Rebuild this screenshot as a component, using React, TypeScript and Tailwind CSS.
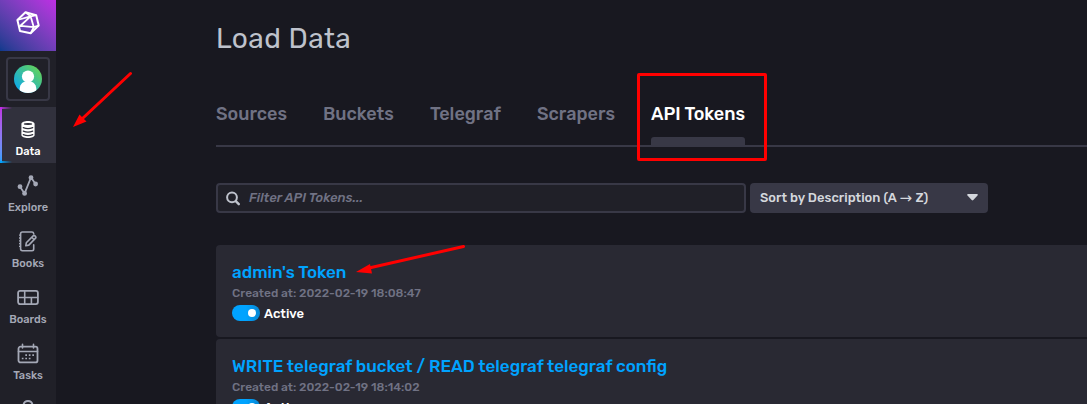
import type { ReactNode } from "react";

const tabs = [
  { label: "Sources", width: "w-[71px]" },
  { label: "Buckets", width: "w-[71px]" },
  { label: "Telegraf", width: "w-[71px]" },
  { label: "Scrapers", width: "w-[78px]" },
];

const tokens = [
  { name: "admin's Token", created: "2022-02-19 18:08:47" },
  { name: "WRITE telegraf bucket / READ telegraf telegraf config", created: "2022-02-19 18:14:02" },
];

function NavItem({ label, active, children }: { label?: string; active?: boolean; children: ReactNode }) {
  return (
    <a
      className={
        "relative flex h-14 w-14 shrink-0 flex-col items-center pt-3 text-[11px] leading-[14px] font-medium " +
        (active ? "bg-[#31313d] text-white" : "text-[#a4a8b6]")
      }
    >
      {active && (
        <>
          <span className="absolute top-0 left-0 h-full w-0.5 bg-linear-to-b from-[#be2ee4] to-[#00a3ff]" />
          <span className="absolute top-0 left-0 h-0.5 w-3 bg-linear-to-r from-[#be2ee4] to-transparent" />
          <span className="absolute bottom-0 left-0 h-0.5 w-3 bg-linear-to-r from-[#00a3ff] to-transparent" />
        </>
      )}
      <svg width="22" height="22" viewBox="0 0 22 22" fill="none" stroke="currentColor" strokeWidth="1.8" strokeLinecap="round" strokeLinejoin="round">
        {children}
      </svg>
      {label && <span className="mt-1">{label}</span>}
    </a>
  );
}

function Sidebar() {
  return (
    <nav className="flex w-14 shrink-0 flex-col items-center overflow-hidden bg-[#202028]">
      <div className="flex h-[51px] w-14 shrink-0 items-center justify-center bg-linear-to-tr from-[#0b3a8d] to-[#be2ee4] pb-[5px]">
        <svg width="24" height="24" viewBox="0 0 24 24" fill="none" stroke="white" strokeWidth="2" strokeLinejoin="round">
          <path d="M9.5 1.3L20.2 4.2L22.7 14.6L14.6 22.3L4 20L1.4 9Z" />
          <path d="M1.4 9L14.6 5.3L20.2 4.2M9.5 1.3L14.6 5.3L17.8 16.2L22.7 14.6M17.8 16.2L4.4 14.8M14.6 5.3L3.6 15.5M17.8 16.2L14.6 22.3" strokeWidth="1.8" />
        </svg>
      </div>
      <div className="my-1.5 flex h-11 w-11 shrink-0 items-center justify-center rounded-[4px] border-2 border-[#383846]">
        <svg width="28" height="28" viewBox="0 0 28 28">
          <defs>
            <linearGradient id="avatar" x1="0" y1="1" x2="1" y2="0">
              <stop stopColor="#00a3ff" />
              <stop offset="1" stopColor="#6fd846" />
            </linearGradient>
            <clipPath id="disc"><circle cx="14" cy="14" r="14" /></clipPath>
          </defs>
          <circle cx="14" cy="14" r="14" fill="url(#avatar)" />
          <g fill="white" clipPath="url(#disc)">
            <circle cx="14" cy="11.5" r="6.1" />
            <path d="M5.6 25C5.6 19.8 8 17.2 11 16.4H17C20 17.2 22.4 19.8 22.4 25V28H5.6Z" />
          </g>
        </svg>
      </div>
      <NavItem label="Data" active>
        <path d="M4.4 5C4.4 1 17.6 1 17.6 5V16C17.6 20 4.4 20 4.4 16Z" fill="currentColor" stroke="none" />
        <ellipse cx="11" cy="5" rx="4.2" ry="0.9" fill="#31313d" stroke="none" />
        <path d="M6.3 8.6Q11 10.6 15.7 8.6M6.3 12.1Q11 14.1 15.7 12.1M6.3 15.6Q11 17.6 15.7 15.6" stroke="#31313d" strokeWidth="1.2" />
      </NavItem>
      <NavItem label="Explore">
        <path d="M3 11.7L7.6 18.4L14 2.5L18.6 9" />
        <g fill="currentColor" stroke="none">
          <circle cx="3" cy="11.7" r="2.4" />
          <circle cx="7.6" cy="18.4" r="2.4" />
          <circle cx="14" cy="2.7" r="2.4" />
          <circle cx="18.6" cy="9" r="2.4" />
        </g>
      </NavItem>
      <NavItem label="Books">
        <path strokeWidth="1.6" d="M16.7 2.6C16.5 1.4 15.8 1 15 1H5.4C4.2 1 3.6 1.7 3.6 2.7V18.1C3.6 19.2 4.2 19.7 5.4 19.7H15C16.2 19.7 16.7 19 16.7 18V13.9M8.8 14.8L9.3 11.8L16.4 4.6C17.3 3.9 19.6 5.9 18.8 6.9L11.8 14.1Z M14.8 6.3L17.2 8.7" />
        <path strokeWidth="1.3" strokeLinecap="butt" d="M2 4.2H4M2 7H4M2 9.8H4M2 12.6H4M2 15.4H4" />
      </NavItem>
      <NavItem label="Boards">
        <rect x="1.1" y="3.9" width="19.8" height="13.2" rx="2" />
        <path d="M1.5 10.5H20.5M7.7 4.2V17M14.4 10.5V17" strokeWidth="1.6" />
      </NavItem>
      <NavItem label="Tasks">
        <rect x="1.5" y="3.7" width="19" height="15.7" rx="2" />
        <path d="M1.5 8.5H20.5M5.5 1.3V5M16.5 1.3V5" strokeWidth="1.6" />
        <path d="M8.3 12.2H10M11.8 12.2H13.5M15.3 12.2H17M4.8 15.5H6.5M8.3 15.5H10M11.8 15.5H13.5" strokeWidth="1.7" strokeLinecap="butt" />
      </NavItem>
      <NavItem>
        <path d="M6.5 21V6.5C6.5 .4 15.5 .4 15.5 6.5V21" strokeWidth="1.9" />
      </NavItem>
    </nav>
  );
}

function TokenCard({ name, created }: { name: string; created: string }) {
  return (
    <article className="h-[92px] shrink-0 rounded-l-[4px] bg-[#292933] px-4 pt-[17px]">
      <h2 className="text-[17px] leading-5 font-medium whitespace-nowrap text-[#00a3ff]">{name}</h2>
      <p className="mt-[3px] text-[12px] leading-4 font-medium text-[#707284]">Created at: {created}</p>
      <div className="mt-1 flex items-center gap-1">
        <span className="flex h-4 w-7 items-center justify-end rounded-full bg-linear-to-r from-[#00a3ff] via-[#00a3ff] to-[#0786d2] pr-1">
          <span className="h-2 w-2 rounded-full bg-white" />
        </span>
        <span className="-mb-0.5 text-[13px] leading-4 font-medium text-white">Active</span>
      </div>
    </article>
  );
}

export default function App() {
  return (
    <div className="relative flex h-[404px] w-[1087px] overflow-hidden bg-[#181820] font-['Rubik','Roboto',sans-serif]">
      <Sidebar />
      <main className="flex flex-1 flex-col pl-40">
        <h1 className="mt-[23px] h-8 shrink-0 text-[28px] leading-8 tracking-[0.4px] text-[#bec2cc]">Load Data</h1>
        <div className="mt-[26px] flex h-[66px] shrink-0 gap-9 border-b-2 border-[#383846] text-[18px] leading-[66px] font-medium text-[#707284]">
          {tabs.map((t) => (
            <span key={t.label} className={"whitespace-nowrap " + t.width}>{t.label}</span>
          ))}
          <span className="relative w-[94px] whitespace-nowrap text-white">
            API Tokens
            <span className="absolute -bottom-0.5 left-0 h-2.5 w-full rounded-t-[3px] bg-[#383846]" />
          </span>
        </div>
        <div className="mt-9 flex h-[30px] shrink-0 gap-1 text-[13px] font-medium">
          <div className="flex w-[530px] items-center rounded-[4px] border-2 border-[#383846] bg-[#202028] pl-2 text-[#707284]">
            <svg width="15" height="15" viewBox="0 0 15 15" fill="none" stroke="#bec2cc" strokeLinecap="round">
              <circle cx="6" cy="6.3" r="4.9" strokeWidth="2" />
              <path d="M10 10.4L12.8 13.2" strokeWidth="2.4" />
            </svg>
            <em className="ml-2">Filter API Tokens...</em>
          </div>
          <div className="flex w-[238px] items-center justify-between rounded-[4px] bg-[#383846] pr-[10px] pl-[10px] text-[#d4d7dd]">
            <span className="flex items-center whitespace-pre">
              Sort by Description (A <span className="w-[13px] font-['DejaVu_Sans'] text-[15px] leading-4 font-normal">→</span> Z)
            </span>
            <svg className="-mt-0.5" width="11" height="7" viewBox="0 0 11 7" fill="currentColor">
              <path d="M1 0H10C11 0 11 1 10.5 1.6L6.3 6.1Q5.5 6.8 4.7 6.1L0.5 1.6C0 1 0 0 1 0Z" />
            </svg>
          </div>
        </div>
        <section className="mt-8 flex shrink-0 flex-col gap-0.5">
          {tokens.map((t) => <TokenCard key={t.name} {...t} />)}
        </section>
      </main>
      <div className="absolute top-[73px] left-[637px] h-[88px] w-[130px] rounded-[2px] border-3 border-[#ff0000]" />
      <svg className="absolute top-0 left-0" width="1087" height="404" fill="#ff0000" stroke="#ff0000" strokeLinecap="round">
        <path d="M130.5 73.5L83 118M463.5 246.5L369 268" strokeWidth="3" />
        <path stroke="none" d="M73 127L79.5 114.5L86.5 121.5ZM356 272L370 264L372 273.5Z" />
      </svg>
    </div>
  );
}
